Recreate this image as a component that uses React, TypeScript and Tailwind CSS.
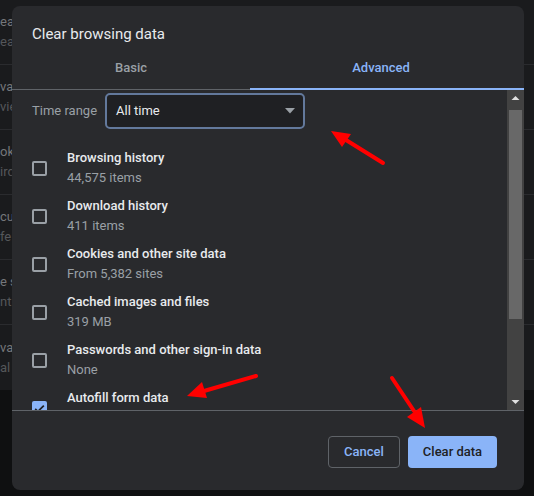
import React from 'react';

const items = [
  { title: 'Browsing history', sub: '44,575 items', checked: false },
  { title: 'Download history', sub: '411 items', checked: false },
  { title: 'Cookies and other site data', sub: 'From 5,382 sites', checked: false },
  { title: 'Cached images and files', sub: '319 MB', checked: false },
  { title: 'Passwords and other sign-in data', sub: 'None', checked: false },
  { title: 'Autofill form data', sub: '', checked: true },
];

const bgRows = [
  ['ear', 'ear'],
  ['va', 'vie'],
  ['ok', 'ird'],
  ['cu', 'fe'],
  ['e s', 'nt'],
  ['va', 'al'],
];

function Checkbox({ checked }: { checked: boolean }) {
  if (checked) {
    return (
      <div className="w-[15px] h-[15px] rounded-[2px] bg-[#8ab4f8] flex items-center justify-center shrink-0">
        <svg viewBox="0 0 24 24" className="w-[13px] h-[13px]" fill="none" stroke="#202124" strokeWidth="3.2">
          <path d="M4 12.5l5 5L20 6.5" />
        </svg>
      </div>
    );
  }
  return <div className="w-[15px] h-[15px] rounded-[2px] border-2 border-[#9aa0a6] shrink-0" />;
}

export default function App() {
  return (
    <div className="relative w-[534px] h-[496px] overflow-hidden bg-[#0f1011]" style={{ fontFamily: 'Roboto, "Liberation Sans", sans-serif' }}>
      {/* dimmed settings page behind */}
      <div className="bg-[#1a1b1d]">
        {bgRows.map((r, i) => (
          <div key={i} className={`h-[65px] flex flex-col justify-center text-[13px] leading-[20px] ${i < bgRows.length - 1 ? 'border-b border-[#2a2b2e]' : ''}`}>
            <span className="text-[#75777a]">{r[0]}</span>
            <span className="text-[#55575a]">{r[1]}</span>
          </div>
        ))}
      </div>

      {/* dialog */}
      <div className="absolute left-[12px] top-[6px] w-[512px] h-[484px] rounded-[8px] bg-[#292a2d] flex flex-col overflow-hidden">
        <div className="h-[40px] pt-[18px] pl-[20px] text-[15px] leading-[20px] text-[#e8eaed]">Clear browsing data</div>
        <div className="flex h-[44px] border-b border-[#5f6368] text-[13px] font-medium">
          <div className="w-[238px] flex items-center justify-center text-[#9aa0a6]">Basic</div>
          <div className="flex-1 flex items-center justify-center text-[#8ab4f8] border-b-2 border-[#8ab4f8] -mb-[1px] pt-[1px] pr-[12px]">Advanced</div>
        </div>

        <div className="flex h-[321px] border-b border-[#5f6368]">
          <div className="flex-1 overflow-hidden pt-[3px]">
            <div className="flex items-center pl-[20px] h-[36px]">
              <span className="text-[13px] text-[#9aa0a6] w-[73px]">Time range</span>
              <div className="w-[200px] h-[36px] rounded-[5px] border-2 border-[#63799c] bg-[#1f2023] flex items-center justify-between pl-[9px] pr-[8px]">
                <span className="text-[13px] text-[#e8eaed]">All time</span>
                <svg width="10" height="6" viewBox="0 0 10 6"><path d="M0 0h10L5 5.5z" fill="#9aa0a6" /></svg>
              </div>
            </div>
            <div className="mt-[15px]">
              {items.map((it) => (
                <div key={it.title} className="h-[48px] flex items-center pl-[20px]">
                  <Checkbox checked={it.checked} />
                  <div className="ml-[20px] flex flex-col text-[13px] leading-[20px]">
                    <span className="text-[#e8eaed] font-medium">{it.title}</span>
                    <span className="text-[#9aa0a6] h-[20px]">{it.sub}</span>
                  </div>
                </div>
              ))}
            </div>
          </div>
          <div className="w-[17px] bg-[#424242] flex flex-col items-center">
            <svg width="17" height="17" viewBox="0 0 17 17"><path d="M4.5 10h8L8.5 6z" fill="#e0e0e0" /></svg>
            <div className="w-[13px] h-[209px] bg-[#686868] mt-[3px]" />
            <div className="flex-1" />
            <svg width="17" height="17" viewBox="0 0 17 17"><path d="M4.5 7h8L8.5 11z" fill="#e0e0e0" /></svg>
          </div>
        </div>

        <div className="flex justify-end gap-[8px] pr-[27px] pt-[25px]">
          <button className="w-[72px] h-[32px] rounded-[4px] border border-[#5f6368] text-[13px] font-medium text-[#8ab4f8]">Cancel</button>
          <button className="w-[89px] h-[32px] rounded-[4px] bg-[#8ab4f8] text-[13px] font-medium text-[#202124]">Clear data</button>
        </div>
      </div>

      {/* red annotation arrows */}
      <svg className="absolute left-0 top-0" width="534" height="496" viewBox="0 0 534 496">
        <g stroke="#ff0000" strokeWidth="4" strokeLinecap="round" fill="#ff0000">
          <line x1="383" y1="163" x2="346" y2="140" />
          <line x1="256" y1="376" x2="204" y2="391" />
          <line x1="392" y1="378" x2="414" y2="411" />
        </g>
        <g fill="#ff0000">
          <polygon points="331,131 351,134 342,147" />
          <polygon points="187,396 202,382 207,398" />
          <polygon points="425,428 407,417 421,407" />
        </g>
      </svg>
    </div>
  );
}
